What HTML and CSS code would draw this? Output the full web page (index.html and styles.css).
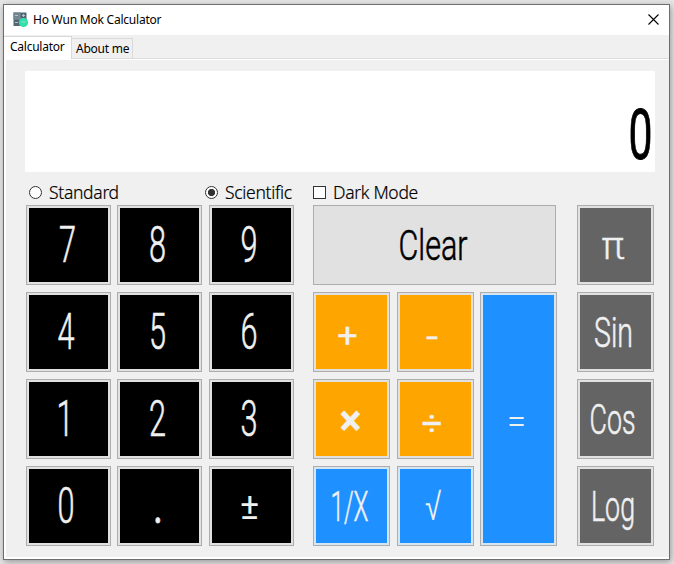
FILE: index.html
```html
<!DOCTYPE html>
<html lang="en">
<head>
<meta charset="utf-8">
<title>Ho Wun Mok Calculator</title>
<link rel="stylesheet" href="styles.css">
</head>
<body>
<main class="window">
  <header class="titlebar">
    <svg class="app-icon" width="16" height="16" viewBox="0 0 16 16">
      <rect x="0.5" y="0.5" width="13" height="13.5" fill="#536773"/>
      <path d="M0.5 0.5h6.500v6.500h-6.500z" fill="#708590"/>
      <path d="M7 0v14M0 7h14" stroke="#8798a2" stroke-width="0.8"/>
      <path d="M2 3.5h3M9 3.5h3M10.5 2v3M2 10.5h3" stroke="#c3ccd1" stroke-width="0.9"/>
      <circle cx="10.5" cy="10.5" r="4.6" fill="#35dda8"/>
      <path d="M8.5 10h4" stroke="#83eccb"/>
    </svg>
    <h1 class="title">Ho Wun Mok Calculator</h1>
    <svg class="close" width="11" height="11" viewBox="0 0 11 11"><path d="M0.5 0.5l10 10M10.5 0.5l-10 10" stroke="#000" stroke-width="1.1"/></svg>
  </header>
  <nav class="tabs">
    <span class="tab tab-active">Calculator</span>
    <span class="tab">About me</span>
  </nav>
  <section class="page">
    <div class="display"><svg width="630" height="101"><text class="readout" x="615.5" y="87.5" textLength="24" lengthAdjust="spacingAndGlyphs">0</text></svg></div>
    <div class="options">
      <label class="option standard"><i class="radio"></i><span>Standard</span></label>
      <label class="option scientific"><i class="radio checked"></i><span>Scientific</span></label>
      <label class="option dark"><i class="check"></i><span>Dark Mode</span></label>
    </div>
    <div class="keys">
      <button class="key num"><svg><text x="38.5" y="54" textLength="17" lengthAdjust="spacingAndGlyphs">7</text></svg></button>
      <button class="key num"><svg><text x="37.5" y="54" textLength="17" lengthAdjust="spacingAndGlyphs">8</text></svg></button>
      <button class="key num"><svg><text x="37" y="54" textLength="17" lengthAdjust="spacingAndGlyphs">9</text></svg></button>
      <button class="key clear"><svg><text class="word" x="117" y="52" textLength="69" lengthAdjust="spacingAndGlyphs">Clear</text></svg></button>
      <button class="key sci"><svg><text class="pi" x="33" y="51" textLength="23" lengthAdjust="spacingAndGlyphs">π</text></svg></button>

      <button class="key num"><svg><text x="37" y="54" textLength="17" lengthAdjust="spacingAndGlyphs">4</text></svg></button>
      <button class="key num"><svg><text x="37.5" y="54" textLength="17" lengthAdjust="spacingAndGlyphs">5</text></svg></button>
      <button class="key num"><svg><text x="37" y="54" textLength="17" lengthAdjust="spacingAndGlyphs">6</text></svg></button>
      <button class="key op"><svg><text class="sym" x="31.5" y="52" textLength="20.5" lengthAdjust="spacingAndGlyphs">+</text></svg></button>
      <button class="key op"><svg><text class="sym" x="32" y="53" textLength="12" lengthAdjust="spacingAndGlyphs">-</text></svg></button>
      <button class="key fn equals"><svg><text class="eq" x="33.5" y="139" textLength="19" lengthAdjust="spacingAndGlyphs">=</text></svg></button>
      <button class="key sci"><svg><text class="word" x="33.5" y="52" textLength="39" lengthAdjust="spacingAndGlyphs">Sin</text></svg></button>

      <button class="key num"><svg><text x="36" y="54" textLength="17" lengthAdjust="spacingAndGlyphs">1</text></svg></button>
      <button class="key num"><svg><text x="37.5" y="54" textLength="17" lengthAdjust="spacingAndGlyphs">2</text></svg></button>
      <button class="key num"><svg><text x="37" y="54" textLength="17" lengthAdjust="spacingAndGlyphs">3</text></svg></button>
      <button class="key op"><svg><text class="sym times" x="34.5" y="53" textLength="22" lengthAdjust="spacingAndGlyphs">×</text></svg></button>
      <button class="key op"><svg><text class="sym" x="32" y="53" textLength="21" lengthAdjust="spacingAndGlyphs">÷</text></svg></button>
      <button class="key sci"><svg><text class="word" x="32.5" y="52" textLength="46" lengthAdjust="spacingAndGlyphs">Cos</text></svg></button>

      <button class="key num"><svg><text x="37" y="54" textLength="17" lengthAdjust="spacingAndGlyphs">0</text></svg></button>
      <button class="key num"><svg><text class="dot" x="38" y="54" textLength="10" lengthAdjust="spacingAndGlyphs">.</text></svg></button>
      <button class="key num"><svg><text class="pm" x="37.5" y="50" textLength="19" lengthAdjust="spacingAndGlyphs">±</text></svg></button>
      <button class="key fn"><svg><text class="word" x="33.5" y="52" textLength="38" lengthAdjust="spacingAndGlyphs">1/X</text></svg></button>
      <button class="key fn"><svg><text class="root" x="33" y="50.5" textLength="16" lengthAdjust="spacingAndGlyphs">√</text></svg></button>
      <button class="key sci"><svg><text class="word" x="33" y="52" textLength="44" lengthAdjust="spacingAndGlyphs">Log</text></svg></button>
    </div>
  </section>
</main>
</body>
</html>
```
FILE: styles.css
```css
* { box-sizing: border-box; }
body {
  margin: 0;
  padding: 4px 0 0 3px;
  height: 564px;
  overflow: hidden;
  background: #e6e6e6;
  font-family: "Noto Sans", sans-serif;
  color: #000;
}
.window {
  width: 667px;
  height: 556px;
  border: 1px solid #6e6e6e;
  background: #f0f0f0;
  box-shadow: 1px 2px 7px rgba(0, 0, 0, .35);
  display: flex;
  flex-direction: column;
}
.titlebar {
  height: 30px;
  background: #fff;
  display: flex;
  align-items: center;
  padding: 0 10px 0 9px;
}
.app-icon { margin-right: 4px; }
.title { margin: 0; font-size: 12px; font-weight: 400; line-height: 16px; letter-spacing: -.22px; }
.close { margin-left: auto; margin-bottom: 2px; }
.tabs {
  height: 24px;
  display: flex;
  align-items: flex-end;
  border-bottom: 1px solid #dcdcdc;
  font-size: 12px;
  line-height: 18px;
  letter-spacing: -.25px;
}
.tab {
  width: 61px;
  height: 20px;
  border: 1px solid #d9d9d9;
  border-bottom: 0;
  border-left: 0;
  padding-left: 4px;
  padding-top: 1px;
  white-space: nowrap;
}
.tab-active {
  width: 68px;
  height: 23px;
  margin-bottom: -1px;
  padding: 1px 0 0 6px;
  background: #fff;
}
.page {
  flex: 1;
  border: solid #fff;
  border-width: 1px 0 2px 2px;
  padding: 11px 0 0 19px;
}
.display { width: 630px; height: 101px; background: #fff; }
.options {
  height: 33px;
  padding: 8px 0 0 4px;
  display: flex;
}
.option {
  display: flex;
  align-items: center;
  height: 24px;
  font-size: 17.5px;
  font-weight: 300;
  letter-spacing: -.3px;
}
.option i { width: 13px; height: 13px; border: 1px solid #333; background: #fff; margin-right: 7px; }
.option span { margin-top: -1px; -webkit-text-stroke: .2px #000; }
.standard { width: 176px; }
.scientific { width: 108px; }
.option .radio { border-radius: 50%; }
.option .checked { background: radial-gradient(circle, #333 0 3.2px, #fff 4px); }
.keys {
  padding-left: 1px;
  display: grid;
  grid-template-columns: 91px 92px 104px 84px 83px 97px 77px;
  grid-template-rows: repeat(4, 80px);
  row-gap: 7px;
}
.key {
  width: 77px;
  padding: 2px;
  border: 1px solid #adadad;
  background: #e1e1e1;
  color: #f0f0f0;
  font-family: Roboto, sans-serif;
}
svg { overflow: visible; }
.key svg { display: block; width: 100%; height: 100%; }
.key text {
  fill: currentColor;
  stroke: currentColor;
  stroke-width: .6px;
  text-anchor: middle;
  font-size: 50px;
  font-weight: 300;
}
.num { width: 85px; }
.num svg { background: #000; }
.op svg { background: #ffa500; }
.fn svg { background: #1e90ff; }
.fn { background: #d5e5f2; }
.sci svg { background: #646464; }
.clear { width: 243px; grid-column: 4 / span 3; color: #000; }
.equals { grid-row: 2 / span 3; grid-column: 6; }
.sci { grid-column: 7; }
.key .word { font-size: 43px; }
.key .pi { font-size: 39px; stroke-width: .4px; }
.key .sym { font-size: 34px; font-weight: 400; stroke-width: .3px; }
.key .times { font-size: 42px; font-weight: 700; }
.key .eq { font-size: 36px; stroke: none; }
.key .dot { font-weight: 400; }
.key .pm { font-size: 36px; font-weight: 400; stroke: none; }
.key .root { font-family: "DejaVu Sans", sans-serif; font-size: 38px; stroke: none; }
.readout {
  font-family: Roboto, sans-serif;
  font-size: 70px;
  text-anchor: middle;
  stroke: #000;
  stroke-width: .8px;
}
```
